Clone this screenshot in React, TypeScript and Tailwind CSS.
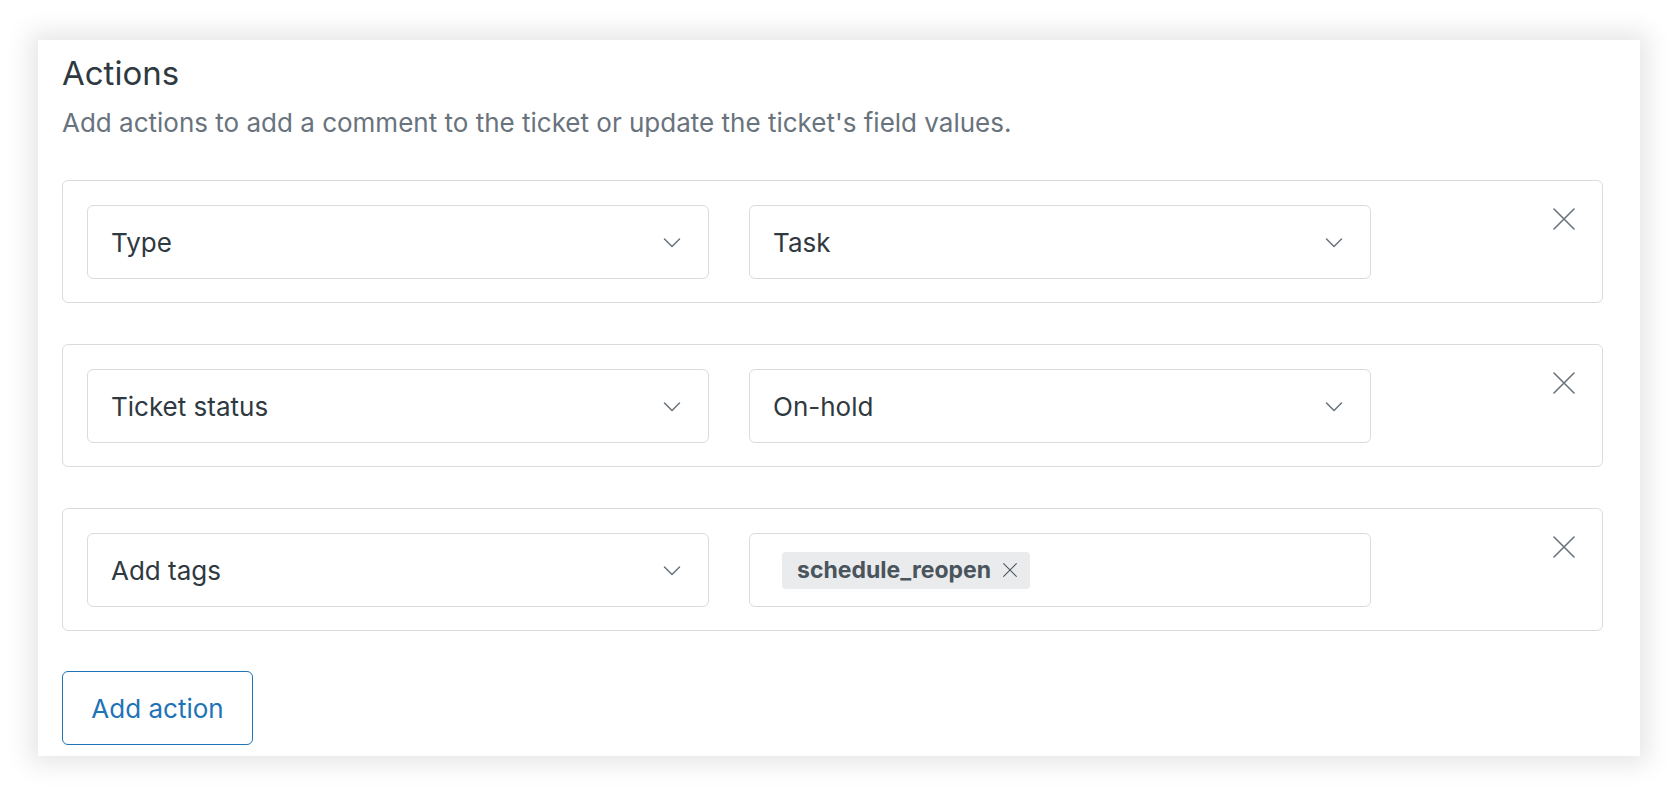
import React from "react";

const ChevronDown = () => (
  <svg width="20" height="20" viewBox="0 0 20 20" fill="none" className="text-[#68737d]">
    <path d="M2.5 7l7.5 7.5L17.5 7" stroke="currentColor" strokeWidth="1.5" strokeLinecap="round" strokeLinejoin="round" />
  </svg>
);

const CloseIcon = ({ size = 22, stroke = 1.6 }: { size?: number; stroke?: number }) => (
  <svg width={size} height={size} viewBox="0 0 22 22" fill="none">
    <path d="M1 1l20 20M21 1L1 21" stroke="currentColor" strokeWidth={stroke} strokeLinecap="round" />
  </svg>
);

const Select = ({ label }: { label: string }) => (
  <div className="w-[622px] h-[74px] border border-[#d8dcde] rounded-[6px] flex items-center justify-between pl-[23px] pr-[26px]">
    <span className="text-[26px] text-[#2f3941]">{label}</span>
    <ChevronDown />
  </div>
);

const Row = ({ field, children }: { field: string; children: React.ReactNode }) => (
  <div className="w-[1541px] h-[123px] border border-[#d8dcde] rounded-[6px] flex items-start p-[24px]">
    <Select label={field} />
    <div className="ml-[40px]">{children}</div>
    <button className="ml-[182px] mt-[3px] text-[#68737d]">
      <CloseIcon />
    </button>
  </div>
);

export default function App() {
  return (
    <div className="w-[1680px] h-[794px] bg-white pt-[40px] pl-[38px]" style={{ fontFamily: "Inter, 'Noto Sans', sans-serif" }}>
      <div className="w-[1602px] h-[716px] bg-white shadow-[0_0_24px_8px_rgba(0,0,0,0.1)] px-[24px] pt-[13px]">
        <h2 className="text-[33px] leading-[40px] text-[#2f3941]">Actions</h2>
        <p className="mt-[14px] text-[26px] leading-[32px] text-[#68737d]">
          Add actions to add a comment to the ticket or update the ticket's field values.
        </p>
        <div className="mt-[41px] flex flex-col gap-[41px]">
          <Row field="Type">
            <Select label="Task" />
          </Row>
          <Row field="Ticket status">
            <Select label="On-hold" />
          </Row>
          <Row field="Add tags">
            <div className="w-[622px] h-[74px] border border-[#d8dcde] rounded-[6px] flex items-center pl-[32px]">
              <span className="h-[37px] pl-[15px] pr-[13px] rounded-[4px] bg-[#e9ebed] flex items-center gap-[12px] text-[#49545c]">
                <span className="text-[23px] font-bold">schedule_reopen</span>
                <CloseIcon size={14} stroke={1.6} />
              </span>
            </div>
          </Row>
        </div>
        <button className="mt-[40px] w-[191px] h-[74px] border-[1.5px] border-[#1f73b7] rounded-[6px] text-[#1f73b7] text-[26px]">
          Add action
        </button>
      </div>
    </div>
  );
}
